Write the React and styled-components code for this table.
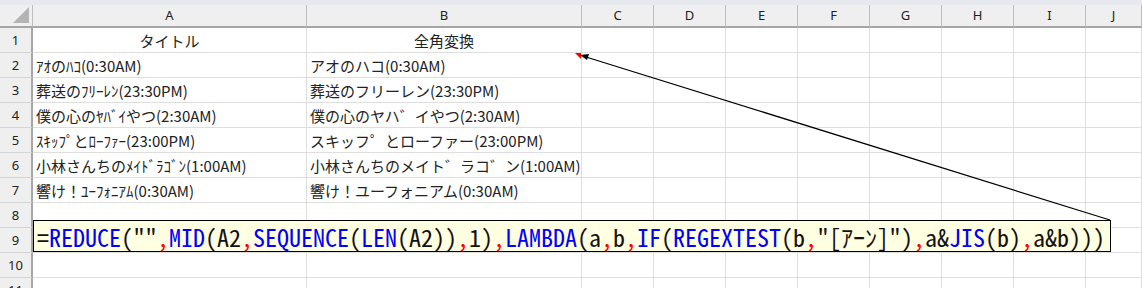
import React from "react";
import styled, { createGlobalStyle } from "styled-components";

const GlobalStyle = createGlobalStyle`
  html, body {
    margin: 0;
    padding: 0;
    background: #fff;
    overflow: hidden;
  }
`;

const COLS = ["A", "B", "C", "D", "E", "F", "G", "H", "I", "J"];

const rows = [
  ["タイトル", "全角変換"],
  ["ｱｵのﾊｺ(0:30AM)", "アオのハコ(0:30AM)"],
  ["葬送のﾌﾘｰﾚﾝ(23:30PM)", "葬送のフリーレン(23:30PM)"],
  ["僕の心のﾔﾊﾞｲやつ(2:30AM)", "僕の心のヤハ゛イやつ(2:30AM)"],
  ["ｽｷｯﾌﾟとﾛｰﾌｧｰ(23:00PM)", "スキッフ゜とローファー(23:00PM)"],
  ["小林さんちのﾒｲﾄﾞﾗｺﾞﾝ(1:00AM)", "小林さんちのメイト゛ラコ゛ン(1:00AM)"],
  ["響け！ﾕｰﾌｫﾆｱﾑ(0:30AM)", "響け！ユーフォニアム(0:30AM)"],
  ["", ""],
  ["", ""],
  ["", ""],
  ["", ""],
];

// formula pieces: [text, kind]  f = function, c = comma, t = plain
const formula = [
  ["=", "t"], ["REDUCE", "f"], ['(""', "t"], [",", "c"],
  ["MID", "f"], ["(A2", "t"], [",", "c"],
  ["SEQUENCE", "f"], ["(", "t"], ["LEN", "f"], ["(A2))", "t"], [",", "c"],
  ["1)", "t"], [",", "c"],
  ["LAMBDA", "f"], ["(a", "t"], [",", "c"], ["b", "t"], [",", "c"],
  ["IF", "f"], ["(", "t"], ["REGEXTEST", "f"], ["(b", "t"], [",", "c"],
  ['"[ｱｰﾝ]")', "t"], [",", "c"], ["a&", "t"], ["JIS", "f"], ["(b)", "t"],
  [",", "c"], ["a&b)))", "t"],
];

const Sheet = styled.div`
  position: relative;
  width: 1142px;
  height: 288px;
  overflow: hidden;
  background: #fff;
`;

const TopStrip = styled.div`
  height: 5px;
  background: #e6e9ed;
`;

const Grid = styled.div`
  display: grid;
  grid-template-columns: 33px 274px 275px repeat(7, 72px) 1fr;
  grid-template-rows: 23px repeat(11, 25px);
`;

const Corner = styled.div`
  position: relative;
  background: #efefef;
  border-right: 1px solid #bdbdbd;
  border-bottom: 2px solid #a6a6a6;
  box-sizing: border-box;

  &::after {
    content: "";
    position: absolute;
    right: 3px;
    bottom: 3px;
    width: 0;
    height: 0;
    border-style: solid;
    border-width: 0 0 16px 16px;
    border-color: transparent transparent #b4b4b4 transparent;
  }
`;

const ColHead = styled.div`
  display: flex;
  align-items: center;
  justify-content: center;
  background: #efefef;
  border-right: 1px solid #bdbdbd;
  border-bottom: 2px solid #a6a6a6;
  box-sizing: border-box;
  font-family: "Noto Sans", "Liberation Sans", sans-serif;
  font-size: 13px;
  color: #222;
  padding-bottom: 1px;
`;

const RowHead = styled.div`
  display: flex;
  align-items: center;
  justify-content: center;
  background: #efefef;
  border-right: 2px solid #a6a6a6;
  border-bottom: 1px solid #d4d4d4;
  box-sizing: border-box;
  font-family: "Noto Sans", "Liberation Sans", sans-serif;
  font-size: 13px;
  color: #222;
`;

const Cell = styled.div`
  position: relative;
  display: flex;
  align-items: center;
  justify-content: ${(p) => (p.$center ? "center" : "flex-start")};
  padding: 0 ${(p) => (p.$center ? "0" : "3px")};
  border-right: 1px solid #dedede;
  border-bottom: 1px solid #dedede;
  box-sizing: border-box;
  font-family: "Noto Sans CJK JP", "Noto Sans", sans-serif;
  font-size: 15px;
  color: #222;
  white-space: nowrap;
  overflow: visible;

  ${(p) =>
    p.$note &&
    `
    &::after {
      content: "";
      position: absolute;
      top: 0;
      right: 0;
      border-style: solid;
      border-width: 0 6px 6px 0;
      border-color: transparent #ff0000 transparent transparent;
    }
  `}
`;

const FormulaBox = styled.div`
  position: absolute;
  left: 33px;
  top: 220px;
  width: 1078px;
  height: 32px;
  box-sizing: border-box;
  background: #ffffe1;
  border: 1px solid #000;
  display: flex;
  align-items: center;
  padding-left: 3px;
  font-family: "Noto Sans Mono CJK JP", "Noto Sans CJK JP", "DejaVu Sans Mono", monospace;
  font-size: 24px;
  white-space: nowrap;
  color: #111;
`;

const Tok = styled.span`
  color: ${(p) => (p.$kind === "f" ? "#0000ff" : p.$kind === "c" ? "#ff0000" : "#111")};
`;

const Overlay = styled.svg`
  position: absolute;
  left: 0;
  top: 0;
  pointer-events: none;
`;

export default function App() {
  return (
    <>
      <GlobalStyle />
      <Sheet>
        <TopStrip />
        <Grid>
          <Corner />
          {COLS.map((c) => (
            <ColHead key={c}>{c}</ColHead>
          ))}
          {rows.map((r, i) => (
            <React.Fragment key={i}>
              <RowHead>{i + 1}</RowHead>
              <Cell $center={i === 0}>{r[0]}</Cell>
              <Cell $center={i === 0} $note={i === 1}>
                {r[1]}
              </Cell>
              {COLS.slice(2).map((c) => (
                <Cell key={c} />
              ))}
            </React.Fragment>
          ))}
        </Grid>
        <FormulaBox>
          {formula.map(([t, k], i) => (
            <Tok key={i} $kind={k}>
              {t}
            </Tok>
          ))}
        </FormulaBox>
        <Overlay width="1142" height="288">
          <line x1="1110" y1="220" x2="586" y2="57" stroke="#000" strokeWidth="1.2" />
          <polygon points="580,55 589,54 587,60" fill="#000" />
        </Overlay>
      </Sheet>
    </>
  );
}
